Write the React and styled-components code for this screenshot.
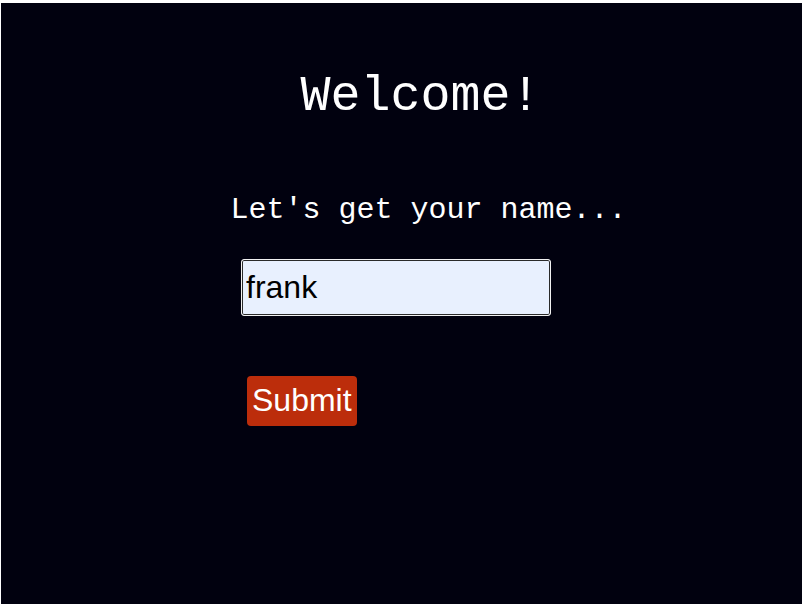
import React from "react";
import styled, { createGlobalStyle } from "styled-components";

const Global = createGlobalStyle`
  html, body {
    margin: 0;
    padding: 0;
    background: #ffffff;
  }
`;

const Page = styled.div`
  box-sizing: border-box;
  width: 801px;
  height: 601px;
  margin: 3px 0 0 1px;
  background: #01010f;
  padding: 66px 0 0 38px;
  display: flex;
  flex-direction: column;
`;

const Title = styled.h1`
  margin: 0;
  font-family: "Liberation Mono", "Courier New", monospace;
  font-weight: normal;
  font-size: 50px;
  line-height: 56px;
  color: #ffffff;
  text-align: center;
`;

const Subtitle = styled.p`
  margin: 68px 0 0 16px;
  font-family: "Liberation Mono", "Courier New", monospace;
  font-size: 30px;
  line-height: 34px;
  color: #ffffff;
  text-align: center;
`;

const Form = styled.form`
  display: flex;
  flex-direction: column;
  align-items: flex-start;
  margin: 32px 0 0 202px;
`;

const NameInput = styled.input`
  box-sizing: border-box;
  width: 310px;
  height: 57px;
  padding: 0 4px;
  border: 1px solid #f2f2f2;
  border-radius: 3px;
  box-shadow: inset 0 0 0 1px #2a2a2a;
  background: #e8f0fe;
  color: #000000;
  caret-color: #000000;
  font-family: "Liberation Sans", Arial, sans-serif;
  font-size: 32px;
  outline: none;
`;

const SubmitButton = styled.button`
  margin: 60px 0 0 6px;
  padding: 4px 5px 5px;
  border: none;
  border-radius: 4px;
  background: #bc2d0b;
  color: #ffffff;
  font-family: "Liberation Sans", Arial, sans-serif;
  font-size: 32px;
  line-height: 41px;
  cursor: pointer;
`;

export default function App() {
  return (
    <>
      <Global />
      <Page>
        <Title>Welcome!</Title>
        <Subtitle>Let's get your name...</Subtitle>
        <Form onSubmit={(e) => e.preventDefault()}>
          <NameInput defaultValue="frank" autoFocus />
          <SubmitButton type="submit">Submit</SubmitButton>
        </Form>
      </Page>
    </>
  );
}
